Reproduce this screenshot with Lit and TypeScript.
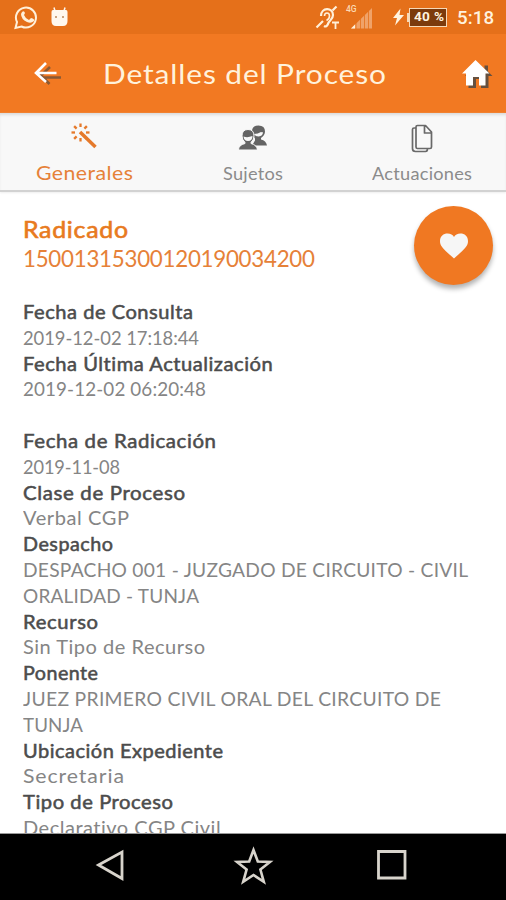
import { LitElement, html, css, svg } from "lit";
import { customElement, property } from "lit/decorators.js";

/** A single line of text, widened and tracked so that it fills the given width. */
@customElement("fit-text")
class FitText extends LitElement {
  @property() text = "";
  @property({ type: Number }) width = 0;
  static styles = css`
    :host { display: block; white-space: pre; }
    span { display: inline-block; transform-origin: 0 50%; }
  `;
  render() {
    return html`<span>${this.text}</span>`;
  }
  updated() {
    const el = this.renderRoot.querySelector("span") as HTMLElement;
    el.style.letterSpacing = "0px";
    el.style.transform = "none";
    const natural = el.getBoundingClientRect().width;
    const scale = 1 + (this.width / natural - 1) * 0.6;
    const tracking = (this.width / scale - natural) / (this.text.length - 1);
    el.style.letterSpacing = tracking + "px";
    el.style.marginRight = this.width - (natural + tracking * this.text.length) + "px";
    el.style.transform = `scaleX(${scale})`;
  }
}

type Line = [kind: "label" | "value" | "gap", text?: string, width?: number];

const LINES: Line[] = [
  ["label", "Fecha de Consulta", 170],
  ["value", "2019-12-02 17:18:44", 176],
  ["label", "Fecha Última Actualización", 250],
  ["value", "2019-12-02 06:20:48", 183],
  ["gap"],
  ["label", "Fecha de Radicación", 193],
  ["value", "2019-11-08", 97],
  ["label", "Clase de Proceso", 162],
  ["value", "Verbal CGP", 106],
  ["label", "Despacho", 90],
  ["value", "DESPACHO 001 - JUZGADO DE CIRCUITO - CIVIL", 445],
  ["value", "ORALIDAD - TUNJA", 176],
  ["label", "Recurso", 75],
  ["value", "Sin Tipo de Recurso", 182],
  ["label", "Ponente", 75],
  ["value", "JUEZ PRIMERO CIVIL ORAL DEL CIRCUITO DE", 418],
  ["value", "TUNJA", 60],
  ["label", "Ubicación Expediente", 200],
  ["value", "Secretaria", 101],
  ["label", "Tipo de Proceso", 150],
  ["value", "Declarativo CGP Civil", 198],
];

const sparks = [0, 45, 90, 135, 180, 225, 270, 315];

@customElement("app-root")
class AppRoot extends LitElement {
  static styles = css`
    :host {
      display: flex; flex-direction: column; height: 900px; width: 506px; overflow: hidden;
      background: #fff; font-family: Lato, "Open Sans", sans-serif; color: #707070;
    }
    svg { display: block; flex: none; }
    .status {
      height: 34px; flex: none; box-sizing: border-box; background: #e5701a; color: #fff3df;
      display: flex; align-items: center; padding: 0 12px 0 14px;
    }
    .robot { margin-left: 12px; }
    .spacer { flex: 1; }
    .signal { margin-right: 19px; }
    .battery {
      margin-left: 5px; width: 38px; height: 19px; box-sizing: border-box; border: 1.5px solid #f6d9b8;
      background: #7c3a0c; color: #fff3df; font: 700 13px/16px Roboto, sans-serif; text-align: center;
      white-space: nowrap; padding-left: 1px;
    }
    .clock { font: 500 18.5px/34px Roboto, sans-serif; margin-left: 10px; padding-top: 2px; }
    .bar {
      height: 79px; flex: none; background: #f27922; color: #fff2dc; display: flex;
      align-items: center; box-sizing: border-box; padding: 1px 12px 0 32px;
    }
    .title { font-size: 27px; line-height: 34px; margin-left: 41px; }
    .home { margin-left: auto; }
    .tabs {
      height: 79px; flex: none; background: #f8f8f8; display: flex; box-sizing: border-box;
      border-bottom: 2px solid #d2d2d2; box-shadow: inset 0 3px 3px -1px #dcdcdc, 0 1px 2px #eee;
    }
    .tab {
      flex: 1; display: flex; flex-direction: column; align-items: center; padding-top: 10px;
      font-size: 17.5px; line-height: 24px; color: #8b8b8b;
    }
    .tab svg { margin-bottom: 8px; }
    .tab.on { color: #e68138; font-size: 20px; line-height: 21px; }
    .content { flex: 1; min-height: 0; overflow: hidden; position: relative; padding: 23px 0 0 23px; border-bottom: 1px solid #999; }
    .heading { color: #e87a20; font-size: 23px; line-height: 29px; -webkit-text-stroke: 0.6px #e87a20; }
    .number { color: #e68138; font-size: 23px; line-height: 29px; margin-bottom: 27px; }
    .label { color: #4c4c4c; font-size: 18.5px; line-height: 25.8px; -webkit-text-stroke: 0.5px #4c4c4c; }
    .value { color: #858585; font-size: 18.5px; line-height: 25.8px; }
    .gap { height: 25.8px; }
    .fab {
      position: absolute; right: 13px; top: 14px; width: 79px; height: 79px; border-radius: 50%;
      background: #f07822; display: grid; place-items: center; box-shadow: 0 4px 5px rgba(0,0,0,.3);
    }
    .nav { height: 66px; flex: none; background: #000; }
  `;

  render() {
    return html`
      <div class="status">
        <svg width="25" height="26" viewBox="0 0 25 26" fill="none" stroke="#fff0da" stroke-width="2">
          <path d="M1.500 24 3 18A10 10 0 1 1 7.500 22.500Z" />
          <path d="M8 8q2-2 3 1l-1 2q1 3 5 5l2-2q4 1 3 3-3 3-7 1-6-3-6-8z" fill="#fff0da" stroke="none" />
        </svg>
        <svg class="robot" width="17" height="20" viewBox="0 0 17 20">
          <path d="M3 .500 4 4M14 .500 13 4" stroke="#fff8ee" stroke-width="1.500" />
          <path d="M2 3h13q1.500 0 1.500 2v9q0 5-4.500 5H5q-4.500 0-4.500-5V5q0-2 1.500-2Z" fill="#fff8ee" />
          <circle cx="5" cy="10" r="1" fill="#b9875a" /><circle cx="12" cy="10" r="1" fill="#b9875a" />
        </svg>
        <div class="spacer"></div>
        <svg class="signal" width="59" height="26" viewBox="0 0 59 26" fill="none" stroke="#fff0da" stroke-width="2.200">
          <path d="M6 12C6 3 18 3 18 11c0 5-4 5-5 9q-1.500 3.500-4 2" />
          <path d="M9.500 12c0-4 5-4 5 0q0 3-3 4.500" stroke-width="1.600" />
          <path d="M1.500 23.500 8 17M17.500 6.500 21.500 2.500" />
          <path d="M17 18.500h7M20.500 18.500v6.500" stroke-width="1.800" />
          <text x="31" y="8" font-family="Roboto" font-weight="500" font-size="8.500" fill="#fbd9b4" stroke="none">4G</text>
          <path d="M36 24.500 57 4v20.500Z" fill="#f0a268" stroke="none" />
          <path d="M36 24.500l4-4v4Z" fill="#fff0da" stroke="none" />
          <path d="M41 15v10M45.500 12v13M49.500 8v17M53.500 5v20" stroke="#e5701a" stroke-width=".8" />
        </svg>
        <svg width="11" height="20" viewBox="0 0 11 20">
          <path d="M7.500 1.500 0 11h4L2 18.500 11 8H6.500Z" fill="#fff3df" />
        </svg>
        <svg width="2" height="9" viewBox="0 0 2 9" style="margin-left:3px;margin-right:-5px"><path d="M0 0h2v9H0Z" fill="#f6d9b8" /></svg>
        <div class="battery"><fit-text text="40 %" width="30"></fit-text></div>
        <div class="clock"><fit-text text="5:18" width="37"></fit-text></div>
      </div>
      <div class="bar">
        <svg width="30" height="30" viewBox="0 0 30 30" fill="none" stroke-width="2.600">
          <path d="M18 8 9 16.500l8.500 8.500M9 18.500h20" stroke="#8a5a35" />
          <path d="M14 4 4 14l10 9M4 14H24.500" stroke="#fff" />
        </svg>
        <div class="title"><fit-text text="Detalles del Proceso" width="283"></fit-text></div>
        <svg class="home" width="33" height="33" viewBox="0 0 33 33">
          <path d="M15 3 1.500 15.500H5v12h7.500v-9h5v9H25v-12h4L24.500 11V5H21v3.500Z" fill="#66503f" transform="translate(2.500 2.500)" />
          <path d="M14.500 2 1 15.500h4v12h7v-8.500h6v8.500h6.500v-12h4Z" fill="#fff" />
        </svg>
      </div>
      <div class="tabs">
        <div class="tab on">
          <svg width="28" height="31" viewBox="0 0 28 31" fill="none" stroke="#e5792b" stroke-width="2">
            ${sparks.map((a) => svg`<path d="M10.500 4V.500" stroke-width="2.300" transform="rotate(${a} 10.500 9.500)" />`)}
            <path d="M10 9 25.500 24" stroke-width="3.500" />
          </svg>
          <fit-text text="Generales" width="97"></fit-text>
        </div>
        <div class="tab">
          <svg width="30" height="31" viewBox="0 0 30 31" fill="#646464">
            <path d="M14 22.500h15q-1-5-6-6v-1.500q4-3 4-6.500 0-6-6.500-6T14 8.500q0 4 3 7v2Z" />
            <path d="M16 11q4 0 7-2 1.500.5 2 0 0 4-4.500 4.500-3 0-4.500-2.500Z" fill="#f8f8f8" />
            <path d="M.500 27q0-5 6.500-6.500v-1q-3-3-3-6.500 0-6.500 6-6.500t6 6.500q0 3.500-3 6.500v1q6 1.500 6.500 6.500Z" stroke="#f8f8f8" stroke-width="1" />
            <path d="M5.500 13.500q4 1.500 9-.5 0 5-4.500 5-4 0-4.500-4.500Z" fill="#f8f8f8" />
          </svg>
          <fit-text text="Sujetos" width="60"></fit-text>
        </div>
        <div class="tab">
          <svg width="24" height="31" viewBox="0 0 24 31" fill="none" stroke="#696969" stroke-width="1.700" stroke-linejoin="round">
            <path d="M5.500 5H4Q2.500 5 2.500 6.500v19q0 3 3 3h10q2 0 2-3M7.500 2.500h8l6 6.500v15q0 1.500-1.500 1.500H7.500Q6 25.500 6 24V4q0-1.500 1.500-1.500ZM14.500 3v7h6.500" />
          </svg>
          <fit-text text="Actuaciones" width="100"></fit-text>
        </div>
      </div>
      <div class="content">
        <fit-text class="heading" text="Radicado" width="105"></fit-text>
        <fit-text class="number" text="15001315300120190034200" width="292"></fit-text>
        ${LINES.map(([kind, text, width]) =>
          kind === "gap"
            ? html`<div class="gap"></div>`
            : html`<fit-text class=${kind} .text=${text ?? ""} .width=${width ?? 0}></fit-text>`
        )}
        <div class="fab">
          <svg width="28" height="26" viewBox="0 0 28 26"><path d="M14 25.500C3 16 0 13 0 8 0 3 3.500.5 7.500.5 10.500.5 13 2 14 4 15 2 17.500.5 20.500.5 24.500.5 28 3 28 8c0 5-3 8-14 17.500Z" fill="#f6f6f6" /></svg>
        </div>
      </div>
      <svg class="nav" width="506" height="66" viewBox="0 0 506 66" fill="none" stroke="#d8d4cc" stroke-width="2.800">
        <path d="M98.500 31 122 18v26.500Z" />
        <path d="M253.500 16l4.300 11.500 12.200.5-9.600 7.600 3.400 12.200-10.300-6.800-10.300 6.800 3.400-12.200L237 28l12.200-.5Z" stroke-width="2.600" />
        <path d="M378.500 17.500h26.500v26.500h-26.500Z" />
      </svg>
    `;
  }
}
